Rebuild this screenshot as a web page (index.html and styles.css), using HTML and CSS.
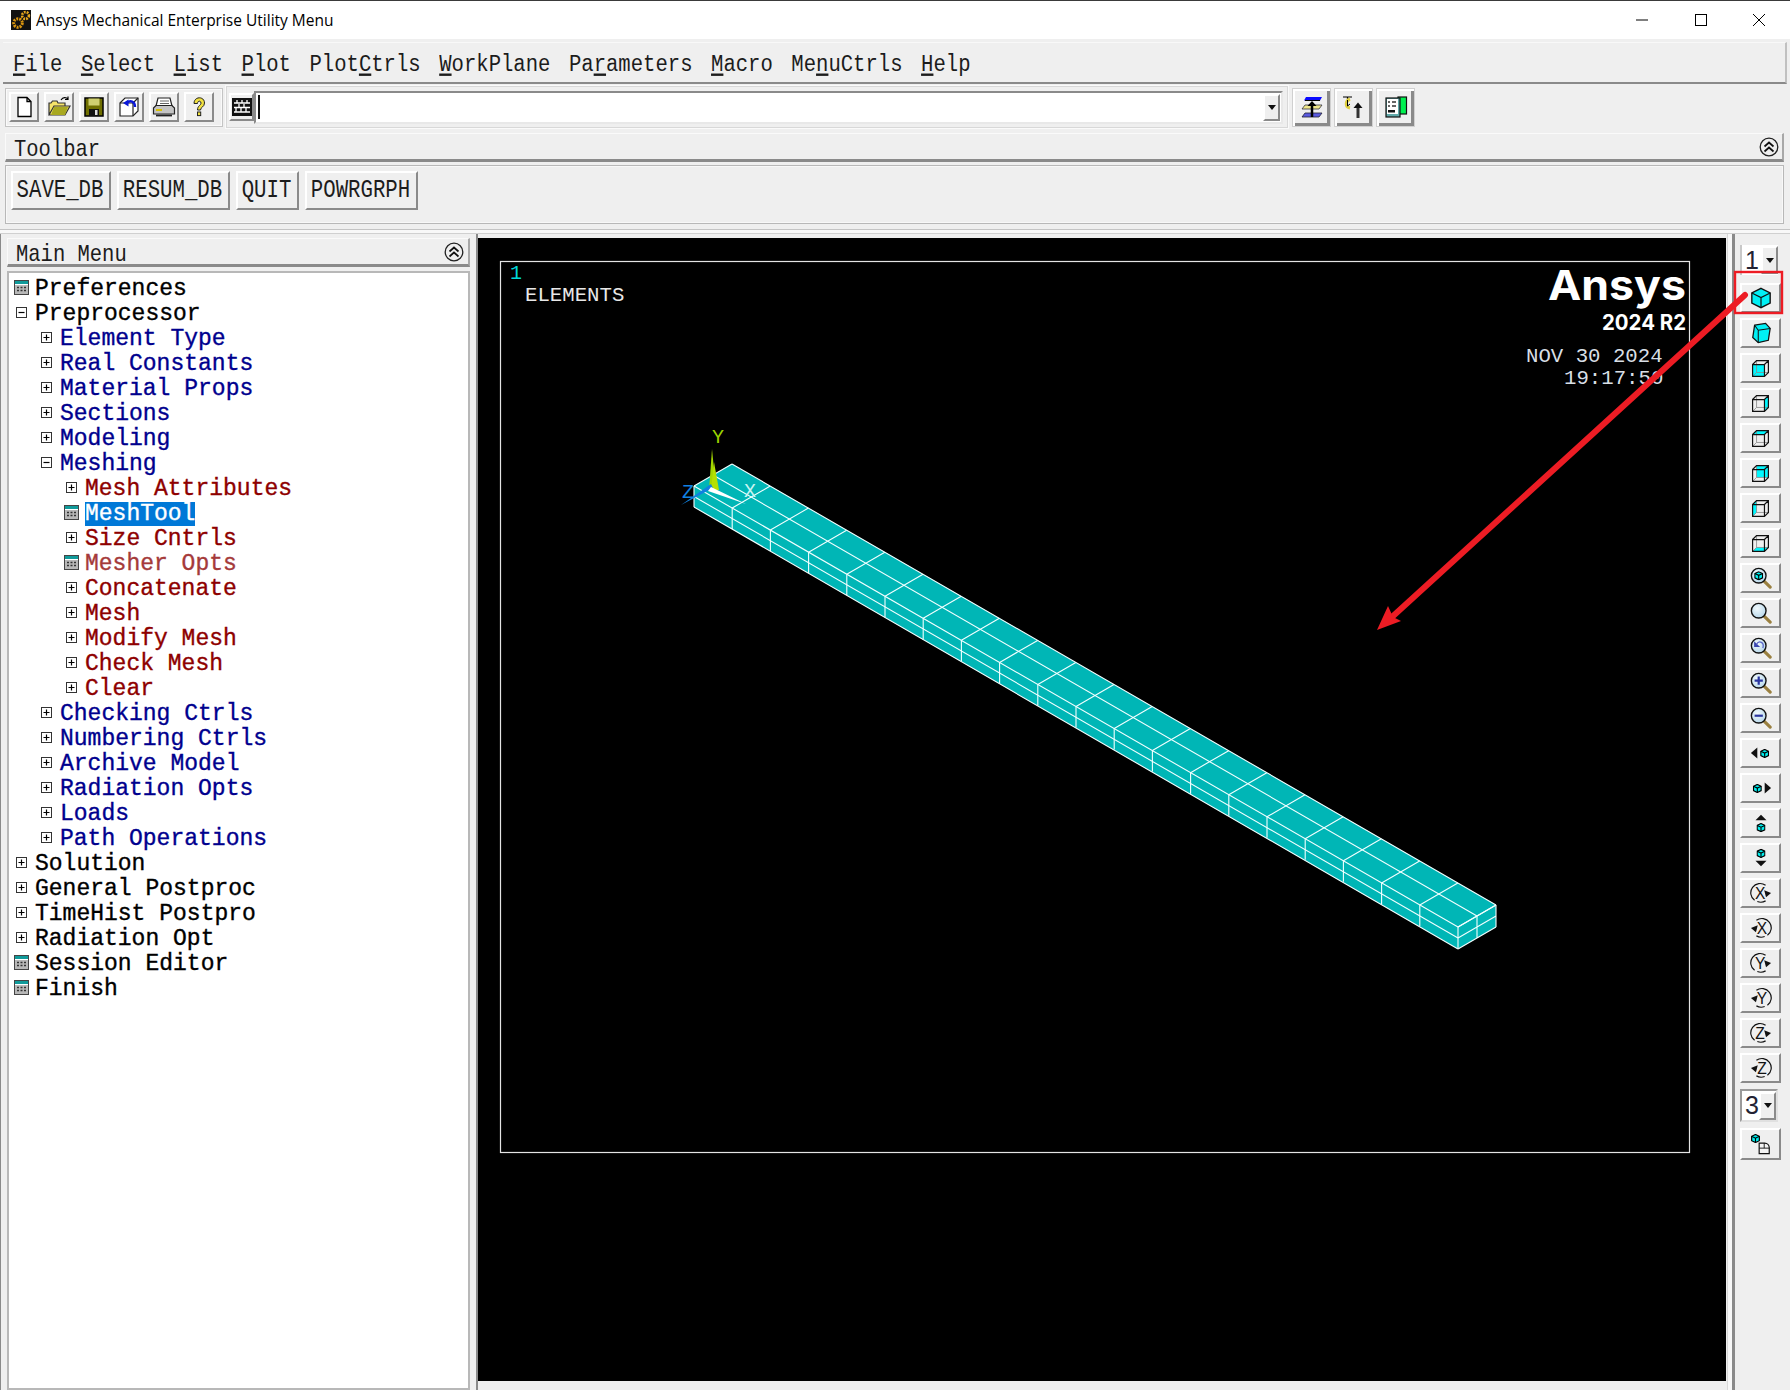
FILE: index.html
```html
<!DOCTYPE html>
<html lang="en">
<head>
<meta charset="utf-8">
<title>Ansys Mechanical Enterprise Utility Menu</title>
<link rel="stylesheet" href="styles.css">
</head>
<body>
<svg class="defs" aria-hidden="true">
  <defs>
    <radialGradient id="lens" cx="40%" cy="35%" r="70%"><stop offset="0" stop-color="#f2fafd"/><stop offset="1" stop-color="#b5d6ea"/></radialGradient>
    <symbol id="mag" viewBox="0 0 24 24">
      <path d="M14.5 14.5L22 22" stroke="#9a8040" stroke-width="3.4" stroke-linecap="round"/>
      <circle cx="9.5" cy="9.5" r="8" fill="url(#lens)" stroke="#111" stroke-width="1.5"/>
    </symbol>
    <symbol id="minicube" viewBox="0 0 10 10">
      <path d="M5 .6L9.2 2.6V7.4L5 9.4.8 7.4V2.6Z" fill="#00f0f0" stroke="#000" stroke-width="1.3"/>
      <path d="M.8 2.6L5 4.6 9.2 2.6M5 4.6V9.4" fill="none" stroke="#000" stroke-width="1.2"/>
    </symbol>
    <symbol id="wire" viewBox="0 0 24 24">
      <path d="M7 2H22V17H7ZM7 17L2 22" fill="none" stroke="#888" stroke-width="1"/>
      <path d="M2 7L7 2H22V17L17 22H2ZM2 7H17V22M17 7L22 2" fill="none" stroke="#111" stroke-width="1.5"/>
    </symbol>
    <symbol id="rotp" viewBox="0 0 24 24">
      <path d="M17 3.6A10 10 0 0 0 5 20M8 21.3A10 10 0 0 0 17 20.6" fill="none" stroke="#111" stroke-width="1.3"/>
      <path d="M15.5 9L23 12 17.5 16.5Z" fill="#111"/>
    </symbol>
    <symbol id="rotm" viewBox="0 0 24 24">
      <path d="M7 3.6A10 10 0 0 1 19 20M16 21.3A10 10 0 0 1 7 20.6" fill="none" stroke="#111" stroke-width="1.3"/>
      <path d="M8.5 9L1 12 6.5 16.5Z" fill="#111"/>
    </symbol>
    <symbol id="plus" viewBox="0 0 11 11">
      <rect x=".5" y=".5" width="10" height="10" fill="#fff" stroke="#333"/>
      <path d="M2.5 5.5H8.5M5.5 2.5V8.5" stroke="#000" stroke-width="1.2"/>
    </symbol>
    <symbol id="minus" viewBox="0 0 11 11">
      <rect x=".5" y=".5" width="10" height="10" fill="#fff" stroke="#333"/>
      <path d="M2.5 5.5H8.5" stroke="#000" stroke-width="1.2"/>
    </symbol>
    <symbol id="calc" viewBox="0 0 15 15">
      <rect x=".5" y=".5" width="14" height="14" fill="#b8b8b8" stroke="#444"/>
      <rect x="1" y="1" width="13" height="3" fill="#109a9a"/>
      <rect x="1" y="4" width="13" height="1" fill="#fff"/>
      <path d="M3 7.5h2M6.5 7.5h2M10 7.5h2M3 10.5h2M6.5 10.5h2M10 10.5h2" stroke="#333" stroke-width="1.3"/>
    </symbol>
    <symbol id="collapse" viewBox="0 0 20 20">
      <circle cx="10" cy="10" r="8.8" fill="none" stroke="#222" stroke-width="1.3"/>
      <path d="M5.5 9.5L10 5.5 14.5 9.5M5.5 14.5L10 10.5 14.5 14.5" fill="none" stroke="#111" stroke-width="1.7"/>
    </symbol>
  </defs>
</svg>

<div class="window">
  <header class="titlebar">
    <svg class="app-icon" viewBox="0 0 20 20">
      <rect width="20" height="20" fill="#111"/>
      <circle cx="7" cy="13" r="4.3" fill="none" stroke="#d9950f" stroke-width="3" stroke-dasharray="2 1"/>
      <circle cx="14.5" cy="5.5" r="3.4" fill="none" stroke="#e8a81c" stroke-width="2.6" stroke-dasharray="1.8 1"/>
    </svg>
    <span class="app-title">Ansys Mechanical Enterprise Utility Menu</span>
    <div class="win-controls">
      <svg class="win-btn" viewBox="0 0 14 14"><path d="M1 7H13" stroke="#000" fill="none"/></svg>
      <svg class="win-btn" viewBox="0 0 14 14"><rect x="1.5" y="1.5" width="11" height="11" stroke="#000" fill="none"/></svg>
      <svg class="win-btn" viewBox="0 0 14 14"><path d="M1 1L13 13M13 1L1 13" stroke="#000" fill="none"/></svg>
    </div>
  </header>

  <nav class="menubar">
    <span><u>F</u>ile</span><span><u>S</u>elect</span><span><u>L</u>ist</span><span><u>P</u>lot</span><span>Plot<u>C</u>trls</span><span><u>W</u>orkPlane</span><span>Pa<u>r</u>ameters</span><span><u>M</u>acro</span><span>Me<u>n</u>uCtrls</span><span><u>H</u>elp</span>
  </nav>

  <div class="cmdrow">
    <div class="filegroup">
      <button class="tool"><svg viewBox="0 0 24 24"><path d="M6 2.5H15L19 6.5V21.5H6ZM15 2.5V6.5H19" fill="#fff" stroke="#000" stroke-width="1.3"/></svg></button>
      <button class="tool"><svg viewBox="0 0 24 24"><path d="M2 20V8H4L5.5 6H10L11 8H18V11H7L2 20H18L23 11H7" fill="#f5e36a" stroke="#333" stroke-width="1.2"/><path d="M4 20L7 12H21L18 20Z" fill="#a8a820"/><path d="M14 5C16 2 19 2 21 4M21 1.5V4.5H18" fill="none" stroke="#000" stroke-width="1.2"/></svg></button>
      <button class="tool"><svg viewBox="0 0 24 24"><rect x="3" y="3" width="18" height="18" fill="#6f6f00" stroke="#000" stroke-width="1.5"/><rect x="6.5" y="3.5" width="11" height="7" fill="#cfcf70"/><rect x="7" y="14" width="10" height="7" fill="#111"/><rect x="13" y="15" width="2.5" height="5" fill="#ddd"/></svg></button>
      <button class="tool"><svg viewBox="0 0 24 24"><path d="M3 8L8 3H21V16L16 21H3Z" fill="#fff" stroke="#222" stroke-width="1.2"/><path d="M3 8H16V21M16 8L21 3" fill="none" stroke="#222" stroke-width="1.2"/><path d="M18 12C18 6 13 5 10 8" fill="none" stroke="#0a18d8" stroke-width="2.4"/><path d="M6 8L11.5 4.5V11.5Z" fill="#0a18d8"/></svg></button>
      <button class="tool"><svg viewBox="0 0 24 24"><path d="M6 3H18L20 11H4Z" fill="#fff" stroke="#222" stroke-width="1.2"/><path d="M8 6H17M8 8.5H17" stroke="#666"/><path d="M1.5 13L4 10.5H20L22.5 13V19H1.5Z" fill="#c4c4c4" stroke="#222" stroke-width="1.2"/><rect x="4" y="14" width="6" height="2" fill="#d8c000"/><path d="M4 20.5H20" stroke="#222" stroke-width="1.8"/></svg></button>
      <button class="tool"><svg viewBox="0 0 24 24"><path d="M7 8.5C7 1 17.5 1 17.5 8C17.5 12 13.5 12 13.5 15H10.5C10.5 10.5 14 10.5 14 8C14 5.5 10.5 5.5 10.5 8.5Z" fill="#f0e040" stroke="#222"/><rect x="10.5" y="17" width="3.2" height="3.6" fill="#f0e040" stroke="#222"/></svg></button>
    </div>
    <div class="cmdbox">
      <button class="tool kbd"><svg viewBox="0 0 24 24"><rect x="2" y="3" width="20" height="18" fill="#111"/><path d="M4 8H20M4 12.5H20M4 17H20M7 5V8M12 5V8M17 5V8M9 9V12M14 9V12M6 13V17M11 13V17M16 13V17" stroke="#fff" stroke-width="1.3"/></svg></button>
      <div class="cmdinput"><span class="caret"></span><button class="dropbtn"><span class="tri"></span></button></div>
    </div>
    <div class="abbrgroup">
      <button class="tool wide"><svg viewBox="0 0 24 24"><path d="M4 5.5L6 2H22L20 5.5Z" fill="#0a0aff"/><path d="M2 14L5 10H22L19 14Z" fill="#efe78a" stroke="#334" stroke-width=".8"/><path d="M2 22L5 18H22L19 22Z" fill="#5a5adf" stroke="#223" stroke-width=".8"/><path d="M12 22V9" stroke="#000" stroke-width="2.5"/><path d="M7.5 11L12 6 16.5 11Z" fill="#000"/><path d="M5 5.5H20" stroke="#000"/></svg></button>
      <button class="tool wide"><svg viewBox="0 0 24 24"><path d="M1 2H10M5.5 2V4" stroke="#000" stroke-width="1.2"/><path d="M8 4C3 6 3 12 8 13" fill="none" stroke="#e0d040" stroke-width="3"/><path d="M5.5 5V11L8 9" fill="none" stroke="#000"/><path d="M16 23V12" stroke="#333" stroke-width="3"/><path d="M11.5 13L16 7.5 20.5 13Z" fill="#111"/></svg></button>
      <button class="tool wide"><svg viewBox="0 0 24 24"><rect x="14" y="2" width="8.5" height="17" fill="#00f050" stroke="#111" stroke-width="1.2"/><rect x="2" y="3" width="14" height="19" fill="#5fa8a8" stroke="#111" stroke-width="1.2"/><rect x="3" y="4" width="11" height="15" fill="#fff"/><path d="M4 7H6M8 7H12M4 11H6M8 11H12" stroke="#333" stroke-width="1.6"/><rect x="4" y="15" width="7" height="2.5" fill="#111"/></svg></button>
    </div>
  </div>

  <div class="paneltitle tb-title"><span>Toolbar</span><svg class="collapse"><use href="#collapse"/></svg></div>
  <div class="tb-box">
    <button class="txtbtn b1"><span>SAVE_DB</span></button>
    <button class="txtbtn b2"><span>RESUM_DB</span></button>
    <button class="txtbtn b3"><span>QUIT</span></button>
    <button class="txtbtn b4"><span>POWRGRPH</span></button>
  </div>
  <div class="hsplit"></div>

  <main class="main">
    <aside class="leftpanel">
      <div class="paneltitle mm-title"><span>Main Menu</span><svg class="collapse"><use href="#collapse"/></svg></div>
      <ul class="tree">
        <li class="d0"><svg class="ic-calc"><use href="#calc"/></svg><span>Preferences</span></li>
        <li class="d0"><svg class="ic"><use href="#minus"/></svg><span>Preprocessor</span></li>
        <li class="d1"><svg class="ic"><use href="#plus"/></svg><span>Element Type</span></li>
        <li class="d1"><svg class="ic"><use href="#plus"/></svg><span>Real Constants</span></li>
        <li class="d1"><svg class="ic"><use href="#plus"/></svg><span>Material Props</span></li>
        <li class="d1"><svg class="ic"><use href="#plus"/></svg><span>Sections</span></li>
        <li class="d1"><svg class="ic"><use href="#plus"/></svg><span>Modeling</span></li>
        <li class="d1"><svg class="ic"><use href="#minus"/></svg><span>Meshing</span></li>
        <li class="d2"><svg class="ic"><use href="#plus"/></svg><span>Mesh Attributes</span></li>
        <li class="d2"><svg class="ic-calc"><use href="#calc"/></svg><span class="sel">MeshTool</span></li>
        <li class="d2"><svg class="ic"><use href="#plus"/></svg><span>Size Cntrls</span></li>
        <li class="d2 light"><svg class="ic-calc"><use href="#calc"/></svg><span>Mesher Opts</span></li>
        <li class="d2"><svg class="ic"><use href="#plus"/></svg><span>Concatenate</span></li>
        <li class="d2"><svg class="ic"><use href="#plus"/></svg><span>Mesh</span></li>
        <li class="d2"><svg class="ic"><use href="#plus"/></svg><span>Modify Mesh</span></li>
        <li class="d2"><svg class="ic"><use href="#plus"/></svg><span>Check Mesh</span></li>
        <li class="d2"><svg class="ic"><use href="#plus"/></svg><span>Clear</span></li>
        <li class="d1"><svg class="ic"><use href="#plus"/></svg><span>Checking Ctrls</span></li>
        <li class="d1"><svg class="ic"><use href="#plus"/></svg><span>Numbering Ctrls</span></li>
        <li class="d1"><svg class="ic"><use href="#plus"/></svg><span>Archive Model</span></li>
        <li class="d1"><svg class="ic"><use href="#plus"/></svg><span>Radiation Opts</span></li>
        <li class="d1"><svg class="ic"><use href="#plus"/></svg><span>Loads</span></li>
        <li class="d1"><svg class="ic"><use href="#plus"/></svg><span>Path Operations</span></li>
        <li class="d0"><svg class="ic"><use href="#plus"/></svg><span>Solution</span></li>
        <li class="d0"><svg class="ic"><use href="#plus"/></svg><span>General Postproc</span></li>
        <li class="d0"><svg class="ic"><use href="#plus"/></svg><span>TimeHist Postpro</span></li>
        <li class="d0"><svg class="ic"><use href="#plus"/></svg><span>Radiation Opt</span></li>
        <li class="d0"><svg class="ic-calc"><use href="#calc"/></svg><span>Session Editor</span></li>
        <li class="d0"><svg class="ic-calc"><use href="#calc"/></svg><span>Finish</span></li>
      </ul>
    </aside>

    <section class="viewport">
      <svg class="scene" viewBox="478 238 1248 1143">
        <rect x="500.5" y="261.5" width="1189" height="891" fill="none" stroke="#e4e4e4" stroke-width="1.2"/>
        <text class="g1" x="510" y="279">1</text>
        <text class="glabel" x="525" y="301">ELEMENTS</text>
        <text class="logo" x="1548" y="300" textLength="138" lengthAdjust="spacingAndGlyphs">Ansys</text>
        <text class="logo2" x="1602" y="330" textLength="84" lengthAdjust="spacingAndGlyphs">2024 R2</text>
        <text class="gdate" x="1526" y="362">NOV 30 2024</text>
        <text class="gdate" x="1564" y="384">19:17:50</text>

        <path d="M732 464L1496 905V927L1458 949L694 507V486Z" fill="#00b6b6"/>
        <path class="mesh" d="M694 486l38-22m.2 44.05l38-22m.2 44.05l38-22m.2 44.05l38-22m.2 44.05l38-22m.2 44.05l38-22m.2 44.05l38-22m.2 44.05l38-22m.2 44.05l38-22m.2 44.05l38-22m.2 44.05l38-22m.2 44.05l38-22m.2 44.05l38-22m.2 44.05l38-22m.2 44.05l38-22m.2 44.05l38-22m.2 44.05l38-22m.2 44.05l38-22m.2 44.05l38-22m.2 44.05l38-22m.2 44.05l38-22"/>
        <path class="mesh" d="M694 486v21m38.2 1.05v21m38.2 1.05v21m38.2 1.05v21m38.2 1.05v21m38.2 1.05v21m38.2 1.05v21m38.2 1.05v21m38.2 1.05v21m38.2 1.05v21m38.2 1.05v21m38.2 1.05v21m38.2 1.05v21m38.2 1.05v21m38.2 1.05v21m38.2 1.05v21m38.2 1.05v21m38.2 1.05v21m38.2 1.05v21m38.2 1.05v21m38.2 1.05v21"/>
        <path class="mesh" d="M694 486L1458 927M713 475L1477 916M732 464L1496 905M694 496.5L1458 938M694 507L1458 949M1458 927L1496 905M1458 938L1496 916M1458 949L1496 927M1477 916V938M1496 905V927"/>

        <path d="M712 449L716 490H709Z" fill="#a2d600"/>
        <path d="M714 462L719 490H711Z" fill="#b4e000"/>
        <path d="M681 505L711 484 713 488Z" fill="#1080e0"/>
        <path d="M711 487L746 504 708 491Z" fill="#fff"/>
        <text class="axis ay" x="712" y="443">Y</text>
        <text class="axis az" x="682" y="498">Z</text>
        <text class="axis ax" x="744" y="497">X</text>
      </svg>
    </section>

    <div class="vsplit"></div>

    <aside class="viewbar">
      <div class="numsel"><span>1</span><button class="dropbtn"><span class="tri"></span></button></div>
      <div class="viewbtns">
        <button class="vbtn"><svg viewBox="0 0 24 24"><path d="M12 1.5L22 6.5V17.5L12 22.5 2 17.5V6.5Z" fill="#00f0f5" stroke="#111" stroke-width="1.5"/><path d="M2 6.5L12 11.5 22 6.5M12 11.5V22.5" fill="none" stroke="#111" stroke-width="1.3"/></svg></button>
        <button class="vbtn"><svg viewBox="0 0 24 24"><path d="M5 3.5L17 1.5 22 7 20 20 9 22.5 3 17Z" fill="#00f0f5" stroke="#111" stroke-width="1.4"/><path d="M5 3.5L9 9 22 7M9 9L9 22.5" fill="none" stroke="#111" stroke-width="1.1"/></svg></button>
        <button class="vbtn"><svg class="cube" viewBox="0 0 24 24"><path d="M2 7H17V22H2Z" fill="#00f8ff"/><use href="#wire" width="24" height="24"/></svg></button>
        <button class="vbtn"><svg class="cube" viewBox="0 0 24 24"><path d="M17 7L22 2V17L17 22Z" fill="#00f8ff"/><use href="#wire" width="24" height="24"/></svg></button>
        <button class="vbtn"><svg class="cube" viewBox="0 0 24 24"><path d="M2 7L7 2H22L17 7Z" fill="#00f8ff"/><use href="#wire" width="24" height="24"/></svg></button>
        <button class="vbtn"><svg class="cube" viewBox="0 0 24 24"><path d="M7 2H22V17H7Z" fill="#00f8ff"/><use href="#wire" width="24" height="24"/></svg></button>
        <button class="vbtn"><svg class="cube" viewBox="0 0 24 24"><path d="M2 7L7 2V17L2 22Z" fill="#00f8ff"/><use href="#wire" width="24" height="24"/></svg></button>
        <button class="vbtn"><svg class="cube" viewBox="0 0 24 24"><path d="M2 22L7 17H22L17 22Z" fill="#00f8ff"/><use href="#wire" width="24" height="24"/></svg></button>
        <button class="vbtn"><svg viewBox="0 0 24 24"><use href="#mag" width="24" height="24"/><use href="#minicube" x="4.5" y="4.5" width="10" height="10"/></svg></button>
        <button class="vbtn"><svg viewBox="0 0 24 24"><use href="#mag" width="24" height="24"/></svg></button>
        <button class="vbtn"><svg viewBox="0 0 24 24"><use href="#mag" width="24" height="24"/><path d="M4.5 4.5V11H11Z" fill="#3a46b0"/><path d="M7 8C10 3 16 6 14 12" fill="none" stroke="#5a66c8" stroke-width="1.4"/></svg></button>
        <button class="vbtn"><svg viewBox="0 0 24 24"><use href="#mag" width="24" height="24"/><path d="M5 9.5H14M9.5 5V14" stroke="#2a36a0" stroke-width="2.4"/></svg></button>
        <button class="vbtn"><svg viewBox="0 0 24 24"><use href="#mag" width="24" height="24"/><path d="M5 9.5H14" stroke="#2a36a0" stroke-width="2.4"/></svg></button>
        <button class="vbtn"><svg viewBox="0 0 24 24"><path d="M8 6V18L1 12Z" fill="#111"/><use href="#minicube" x="11" y="7.5" width="10" height="10"/></svg></button>
        <button class="vbtn"><svg viewBox="0 0 24 24"><use href="#minicube" x="3" y="7.5" width="10" height="10"/><path d="M16 6V18L23 12Z" fill="#111"/></svg></button>
        <button class="vbtn"><svg viewBox="0 0 24 24"><path d="M6 9H18L12 3Z" fill="#111"/><use href="#minicube" x="7" y="12" width="10" height="10"/></svg></button>
        <button class="vbtn"><svg viewBox="0 0 24 24"><use href="#minicube" x="7" y="2" width="10" height="10"/><path d="M6 15H18L12 21Z" fill="#111"/></svg></button>
        <button class="vbtn"><svg viewBox="0 0 24 24"><use href="#rotp" width="24" height="24"/><text class="rotl" x="11" y="18.5">X</text></svg></button>
        <button class="vbtn"><svg viewBox="0 0 24 24"><use href="#rotm" width="24" height="24"/><text class="rotl" x="13" y="18.5">X</text></svg></button>
        <button class="vbtn"><svg viewBox="0 0 24 24"><use href="#rotp" width="24" height="24"/><text class="rotl" x="11" y="18.5">Y</text></svg></button>
        <button class="vbtn"><svg viewBox="0 0 24 24"><use href="#rotm" width="24" height="24"/><text class="rotl" x="13" y="18.5">Y</text></svg></button>
        <button class="vbtn"><svg viewBox="0 0 24 24"><use href="#rotp" width="24" height="24"/><text class="rotl" x="11" y="18.5">Z</text></svg></button>
        <button class="vbtn"><svg viewBox="0 0 24 24"><use href="#rotm" width="24" height="24"/><text class="rotl" x="13" y="18.5">Z</text></svg></button>
      </div>
      <div class="numsel numsel3"><span>3</span><button class="dropbtn"><span class="tri"></span></button></div>
      <button class="vbtn vbtn-last"><svg viewBox="0 0 24 24"><use href="#minicube" x="1" y="1" width="10" height="10"/><path d="M10 11H16A5 5 0 0 1 21 16V22.5H10Z" fill="#f4f4f4" stroke="#111" stroke-width="1.3"/><path d="M10 16.5H21M15.5 11V16.5" stroke="#111"/></svg></button>
    </aside>
  </main>

  <svg class="annot" viewBox="0 0 1790 1390" aria-hidden="true">
    <rect x="1735" y="272" width="47" height="41" fill="none" stroke="#ed1c24" stroke-width="2.4"/>
    <path d="M1745 295L1392 617" stroke="#ed1c24" stroke-width="6" stroke-linecap="round"/>
    <path d="M1377 630L1388 606 1393 617 1401 621Z" fill="#ed1c24"/>
  </svg>
</div>
</body>
</html>
```

FILE: styles.css
```css
* { box-sizing: border-box; }
html, body { margin: 0; padding: 0; }
body { background: #f0f0f0; width: 1790px; height: 1390px; overflow: hidden; }
button { font: inherit; padding: 0; margin: 0; }
.defs { position: absolute; width: 0; height: 0; }

.window {
  position: relative;
  width: 1790px;
  height: 1390px;
  display: flex;
  flex-direction: column;
  background: #efefef;
  font-family: "Liberation Mono", monospace;
  color: #1c1c1c;
  overflow: hidden;
}

/* title bar */
.titlebar {
  height: 39px;
  flex: none;
  display: flex;
  align-items: center;
  background: #fff;
  border-top: 1px solid #3a3a3a;
  padding-left: 11px;
  font-family: "Open Sans", "Noto Sans", sans-serif;
  font-size: 15.5px;
  color: #000;
}
.app-icon { width: 20px; height: 20px; flex: none; margin-top: -1px; }
.app-title { margin-left: 5px; margin-top: -1px; }
.win-controls { margin-left: auto; display: flex; margin-right: 24px; gap: 44.5px; margin-top: -1px; }
.win-btn { width: 14px; height: 14px; display: block; }

/* menu bar */
.menubar {
  flex: none;
  margin: 3px 3px 0 3px;
  height: 42px;
  display: flex;
  align-items: center;
  gap: 18.5px;
  padding: 5px 0 2px 10px;
  font-size: 20.6px;
  border-right: 2px solid #c0c0c0;
  border-bottom: 2px solid #8a8a8a;
  border-top: 1px solid #f8f8f8;
}
.menubar span { display: inline-block; transform: scaleY(1.2); }
.menubar u { text-underline-offset: 2px; text-decoration-thickness: 2px; }

/* command row */
.cmdrow {
  flex: none;
  height: 46px;
  display: flex;
  align-items: center;
  padding-left: 5px;
}
.filegroup {
  width: 218px;
  height: 39px;
  display: flex;
  align-items: center;
  gap: 5px;
  padding-left: 3px;
  border: 1px solid #c4c4c4;
  box-shadow: inset 0 0 0 1px #fafafa;
}
.tool {
  width: 30px;
  height: 30px;
  background: #efefef;
  border: 2px solid;
  border-color: #fff #8a8a8a #8a8a8a #fff;
  display: flex;
  align-items: center;
  justify-content: center;
}
.tool svg { width: 24px; height: 24px; flex: none; }
.cmdbox {
  width: 1064px;
  height: 44px;
  margin-left: 2px;
  display: flex;
  align-items: center;
  padding-left: 3px;
  border: 1px solid #fafafa;
  box-shadow: inset 0 0 0 1px #d8d8d8;
}
.kbd { width: 25px; height: 28px; }
.cmdinput {
  width: 1029px;
  height: 33px;
  background: #fff;
  border: 2px solid;
  border-color: #8a8a8a #e8e8e8 #e8e8e8 #8a8a8a;
  display: flex;
  align-items: center;
  justify-content: space-between;
  padding: 0 1px 0 2px;
}
.caret { width: 2px; height: 24px; background: #111; }
.dropbtn {
  width: 17px;
  height: 27px;
  background: #efefef;
  border: 2px solid;
  border-color: #fff #8a8a8a #8a8a8a #fff;
  display: flex;
  align-items: center;
  justify-content: center;
}
.tri { width: 0; height: 0; border: 4px solid transparent; border-top: 5px solid #111; border-bottom: 0; }
.abbrgroup { display: flex; margin-left: 3px; gap: 3px; }
.tool.wide {
  width: 39px;
  height: 39px;
  border: 1px solid #d0d0d0;
  box-shadow: inset 1px 1px 0 1px #fff, inset -2px -2px 0 1px #8a8a8a;
}

/* panel titles */
.paneltitle {
  flex: none;
  display: flex;
  align-items: center;
  justify-content: space-between;
  border-top: 1px solid #fafafa;
  border-left: 1px solid #fafafa;
  border-right: 2px solid #a8a8a8;
  border-bottom: 3px solid #8a8a8a;
  font-size: 20.5px;
}
.paneltitle span { display: inline-block; margin-top: 6px; transform: scaleY(1.2); }
.tb-title { margin: 3px 6px 0 5px; height: 29px; padding: 0 3px 0 8px; }
.collapse { width: 20px; height: 20px; flex: none; }
.tb-box {
  flex: none;
  margin: 3px 6px 0 5px;
  height: 59px;
  display: flex;
  align-items: flex-start;
  gap: 6px;
  padding: 5px 0 0 5px;
  border: 1px solid #b8b8b8;
  box-shadow: inset 0 0 0 1px #f8f8f8;
}
.txtbtn {
  height: 39px;
  background: #efefef;
  font-size: 20.7px;
  color: #1c1c1c;
  font-family: inherit;
  border: 2px solid;
  border-color: #fff #8a8a8a #8a8a8a #fff;
  padding-right: 2px;
}
.txtbtn span { display: inline-block; transform: scaleY(1.2); }
.b1 { width: 100px; }
.b2 { width: 113px; }
.b3 { width: 63px; }
.b4 { width: 113px; }
.hsplit {
  flex: none;
  height: 5px;
  margin-top: 5px;
  border-top: 1px solid #c4c4c4;
  border-bottom: 1px solid #d0d0d0;
  background: #f8f8f8;
}

/* main area */
.main { flex: 1; min-height: 0; display: flex; align-items: stretch; }
.leftpanel {
  flex: none;
  width: 478px;
  padding: 4px 6px 0 7px;
  display: flex;
  flex-direction: column;
  border-left: 1px solid #8a8a8a;
  border-right: 2px solid #8a8a8a;
}
.mm-title { height: 29px; padding: 0 4px 0 8px; margin-left: -1px; }
.tree {
  list-style: none;
  margin: 4px 0 0 -1px;
  padding: 3px 0 0 0;
  flex: 1;
  background: #fff;
  border: 2px solid #b8b8b8;
  font-size: 23px;
  -webkit-text-stroke: .35px currentColor;
  overflow: hidden;
}
.tree li {
  height: 25px;
  display: flex;
  align-items: center;
  white-space: pre;
}
.d0 { color: #000; padding-left: 5px; }
.d1 { color: #00008e; padding-left: 30px; }
.d2 { color: #8e0000; padding-left: 55px; }
.tree .light { color: #a53a3a; }
.ic { width: 11px; height: 11px; flex: none; margin: -2px 8px 0 2px; }
.ic-calc { width: 15px; height: 15px; flex: none; margin: -2px 6px 0 0; }
.sel { background: #0078d7; color: #fff; line-height: 24px; }

.viewport {
  flex: none;
  width: 1248px;
  height: 1143px;
  margin-top: 4px;
  background: #000;
}
.scene { display: block; width: 1248px; height: 1143px; font-family: "Liberation Mono", monospace; }
.mesh { fill: none; stroke: #f2ffff; stroke-width: 1.1; }
.g1 { fill: #00d8d8; font-size: 20px; }
.glabel { fill: #e8e8e8; font-size: 20.7px; }
.gdate { fill: #d8dfe6; font-size: 20.7px; }
.logo { fill: #fff; font: 700 41px Inter, "Open Sans", sans-serif; }
.logo2 { fill: #fff; font: 700 21px Inter, "Open Sans", sans-serif; }
.axis { font-size: 20px; }
.ay { fill: #9ad200; }
.az { fill: #1080e0; }
.ax { fill: #c8f4f2; }

.vsplit {
  flex: none;
  width: 8px;
  margin-left: 1px;
  border-left: 1px solid #d8d8d8;
  border-right: 3px solid #8a8a8a;
  background: #f8f8f8;
}
.viewbar {
  flex: 1;
  min-width: 0;
  padding: 11px 0 0 5px;
  display: flex;
  flex-direction: column;
  align-items: flex-start;
}
.numsel {
  width: 38px;
  height: 30px;
  display: flex;
  align-items: center;
  justify-content: space-between;
  background: #fff;
  border-left: 2px solid #c8c8c8;
  font-family: "Liberation Sans", sans-serif;
  font-size: 25px;
  padding-left: 3px;
  color: #223;
}
.numsel .dropbtn { width: 17px; height: 28px; }
.numsel3 { height: 33px; margin-top: 6px; border: 2px solid #9a9a9a; border-bottom-color: #e0e0e0; border-right-color: #e0e0e0; padding-left: 3px; }
.viewbtns { display: flex; flex-direction: column; gap: 5px; margin-top: 8px; }
.vbtn {
  width: 41px;
  height: 30px;
  background: #efefef;
  border: 2px solid;
  border-color: #fff #8a8a8a #8a8a8a #fff;
  display: flex;
  align-items: center;
  justify-content: center;
  padding: 0;
}
.vbtn svg { width: 22px; height: 22px; flex: none; }
.vbtn svg.cube { width: 19px; height: 19px; }
.vbtn-last { margin-top: 6px; height: 32px; }
.rotl { font: 400 17px "Liberation Sans", sans-serif; text-anchor: middle; fill: #111; }

/* annotation drawn over the screenshot */
.annot { position: absolute; left: 0; top: 0; width: 1790px; height: 1390px; pointer-events: none; }
```
